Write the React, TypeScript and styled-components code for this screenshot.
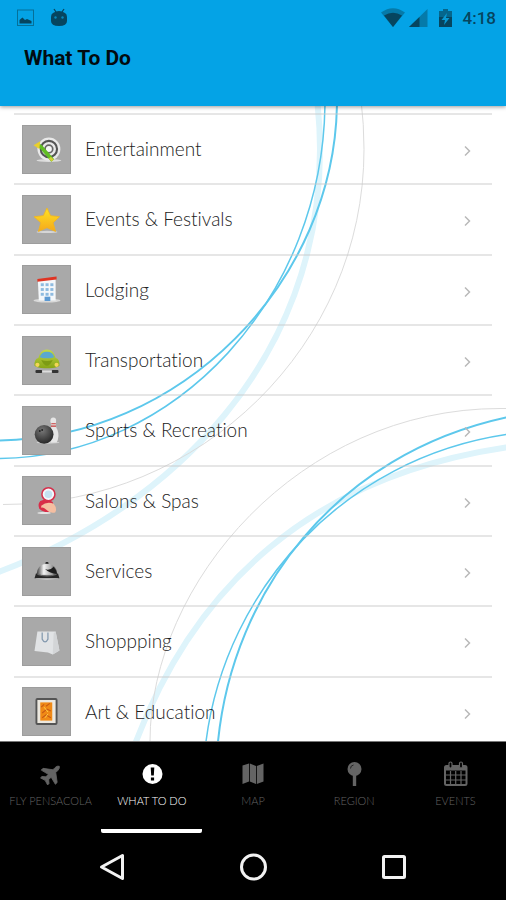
import React from "react";
import styled, { createGlobalStyle } from "styled-components";

const GlobalStyle = createGlobalStyle`
  * { box-sizing: border-box; }
  body { margin: 0; background: #000; }
  button { font: inherit; color: inherit; background: none; border: 0; padding: 0; cursor: pointer; }
`;

const Screen = styled.div`
  display: flex;
  flex-direction: column;
  height: 100vh;
  font-family: Lato, "Open Sans", sans-serif;
  font-variant-ligatures: none;
  background: #fff;
`;

const Gradients = styled.svg`
  position: absolute;
  width: 0;
  height: 0;
`;

const Header = styled.header`
  position: relative;
  z-index: 1;
  flex: none;
  height: 106px;
  background: #04a3e6;
  box-shadow: 0 1px 4px rgba(0, 0, 0, 0.4);
  font-family: Roboto, sans-serif;
`;

const StatusBar = styled.div`
  display: flex;
  align-items: center;
  justify-content: space-between;
  height: 36px;
  padding: 0 10px 0 16px;
  color: #06455f;
`;

const StatusGroup = styled.div<{ $gap: number }>`
  display: flex;
  align-items: center;
  gap: ${(p) => p.$gap}px;
`;

const Clock = styled.time`
  font-size: 17px;
  font-weight: 500;
  line-height: 20px;
`;

const Title = styled.h1`
  margin: 8px 0 0 24px;
  font-size: 21px;
  font-weight: 700;
  line-height: 28px;
  color: #020b10;
`;

const Main = styled.main`
  position: relative;
  flex: 1;
  min-height: 0;
  display: flex;
  flex-direction: column;
  padding: 7px 14px 0;
  overflow: hidden;
`;

const Backdrop = styled.svg`
  position: absolute;
  inset: 0;
  width: 100%;
  height: 100%;
`;

const List = styled.ul`
  position: relative;
  flex: 1;
  display: flex;
  flex-direction: column;
  margin: 0 0 -5px;
  padding: 0;
  list-style: none;
`;

const Item = styled.li`
  flex: 1;
  display: flex;
  border-top: 2px solid rgba(200, 200, 200, 0.45);
`;

const RowButton = styled.button`
  flex: 1;
  display: flex;
  align-items: center;
  gap: 14px;
  padding: 0 21px 0 8px;
  text-align: left;
`;

const Tile = styled.svg`
  flex: none;
  width: 49px;
  height: 49px;
  background: #a9a9a9;
  border: 1px solid #9d9d9d;
`;

const RowLabel = styled.span`
  flex: 1;
  font-size: 19px;
  font-weight: 300;
  line-height: 24px;
  color: #222;
`;

const Chevron = styled.svg`
  flex: none;
  width: 8px;
  height: 12px;
  margin-top: 4px;
`;

const TabBar = styled.nav`
  flex: none;
  display: flex;
  height: 92px;
  background: #000;
  border-top: 1px solid #777;
`;

const Tab = styled.button<{ $active: boolean }>`
  flex: 1;
  display: flex;
  flex-direction: column;
  align-items: center;
  gap: 5px;
  padding-top: 18px;
  border-bottom: 4px solid ${(p) => (p.$active ? "#fff" : "transparent")};
  border-radius: 2px;
  color: ${(p) => (p.$active ? "#fff" : "#646464")};
  font-size: 11px;
  font-weight: 300;
  line-height: 16px;
  white-space: nowrap;
`;

const TabIcon = styled.svg`
  width: 28px;
  height: 28px;
`;

const SystemBar = styled.div`
  flex: none;
  display: flex;
  height: 67px;
  padding: 0 42px;
  background: #000;
`;

const SystemButton = styled.button`
  flex: 1;
  display: flex;
  align-items: center;
  justify-content: center;
`;

const PALE = "#def4fb";
const GREY = "#dcdcdc";
const BLUE = "#5dc8ec";

const rings = [
  { color: PALE, width: 6, d: "M317 100 Q320 125 320 150 C320 360 173 506 0 572 L-6 574" },
  { color: PALE, width: 6, d: "M512 447 L506 448 C311 477 195 587 136 742 L134 748" },
  { color: GREY, width: 1, d: "M361 100 Q364 125 364 150 C364 345 201 505 3 505" },
  { color: GREY, width: 1, d: "M512 409 L500 409 C300 409 150 583 150 742 V748" },
  { color: BLUE, width: 2, d: "M337 100 C337 283 179 441 -4 441" },
  { color: BLUE, width: 1.5, d: "M325 100 C325 297 176 459 -4 459" },
  { color: BLUE, width: 2, d: "M512 417 L506 418 C336 455 233 592 218 742 L217 748" },
  { color: BLUE, width: 1.5, d: "M512 434 L506 435 C346 459 226 587 206 742 L205 748" },
];

const drawings: Record<string, React.ReactNode> = {
  target: (
    <>
      <ellipse cx="27" cy="36" rx="13" ry="1.5" fill="#dcdcdc" />
      <circle cx="27" cy="24" r="12" fill="#e9e9e9" />
      <circle cx="27" cy="24" r="8.5" fill="none" stroke="#555" strokeWidth="2.2" />
      <circle cx="27" cy="24" r="4" fill="#f6f6f6" stroke="#666" strokeWidth="1.8" />
      <path d="M15 19 L19 22 L31 36" fill="none" stroke="#61bd24" strokeWidth="4" />
      <path d="M11 20 L18 16 L17 24 Z" fill="#e9cf2c" />
      <path d="M28 33 L31 36" stroke="#d5ce35" strokeWidth="3" />
    </>
  ),
  star: (
    <>
      <ellipse cx="25" cy="37.5" rx="11" ry="1.2" fill="#d6d6d6" />
      <path
        d="M25 12.5 L28.8 20.5 L38 21.6 L31.4 28 L34 37 L25 33 L16 37 L18.6 28 L11.5 21.6 L21.2 20.5 Z"
        fill="url(#gold)"
        stroke="#f3b41b"
        strokeWidth="0.8"
        strokeLinejoin="round"
      />
    </>
  ),
  hotel: (
    <>
      <ellipse cx="25" cy="36" rx="14" ry="2" fill="#d9d9d9" />
      <path d="M15.5 15 L34 13 V36 H16.5 Z" fill="#f4f7fa" />
      <path d="M15 13.5 L35 11 V14 L15 16.5 Z" fill="#df3423" />
      <g fill="#8fbbe0">
        {[18.5, 23.5, 28.5].map((x) =>
          [18, 23, 28].map((y) => <rect key={`${x}-${y}`} x={x} y={y} width="3.2" height="3" />)
        )}
      </g>
      <rect x="22.5" y="32" width="6" height="4.5" fill="#5d9ad3" />
    </>
  ),
  car: (
    <>
      <rect x="13" y="34.5" width="7" height="3" rx="1" fill="#333" />
      <rect x="30" y="34.5" width="7" height="3" rx="1" fill="#333" />
      <rect x="20" y="35" width="10" height="2" fill="#ddd" />
      <path d="M12 30 Q11.5 23 16 22 Q18 13 25 13 Q32 13 34 22 Q38.5 23 38 30 Q35 33 25 32.5 Q15 33 12 30 Z" fill="url(#lime)" />
      <path d="M17.5 21 Q19 15.5 25 15.5 Q31 15.5 32.5 21 Q25 23.5 17.5 21 Z" fill="#5aa8cf" />
      <circle cx="15" cy="29" r="2.2" fill="#f4d657" />
      <circle cx="35" cy="29" r="2.2" fill="#f4d657" />
      <path d="M19 24 Q25 36 31 24 Q25 26 19 24 Z" fill="#7d9b14" />
    </>
  ),
  bowling: (
    <>
      <ellipse cx="26" cy="37" rx="12" ry="1.2" fill="#cecece" />
      <path d="M31.5 11 Q35 11 34.5 15 Q33.5 20 36 24 Q38.5 31 35 37 H29 Q26 30 28.5 24 Q30.5 20 28.5 15 Q28.5 11 31.5 11 Z" fill="#e6e6e6" />
      <path d="M29.5 17.5 H34.2 M29.2 20 H34.4" stroke="#c63a3a" strokeWidth="1.2" />
      <circle cx="22" cy="28.5" r="9.8" fill="url(#ball)" />
      <circle cx="17.5" cy="25" r="1" fill="#222" />
      <circle cx="20" cy="24" r="1" fill="#222" />
    </>
  ),
  compact: (
    <>
      <ellipse cx="22" cy="37.5" rx="7" ry="1.2" fill="#e4e4e4" />
      <path d="M18 25 Q25 22 31 26 L33 35 Q23 39 17 33 Q15 28 18 25 Z" fill="#d92c48" />
      <circle cx="26.5" cy="18" r="6.8" fill="#f3f8fb" stroke="#d62f4b" strokeWidth="1.6" />
      <circle cx="26.5" cy="18" r="4" fill="#c5e2f1" />
      <path d="M19 30 Q25 25 32 28 Q36 33 33.5 37 Q28 38.5 24 34 Q21 31 19 32 Z" fill="#f5bea1" />
    </>
  ),
  bell: (
    <>
      <ellipse cx="25" cy="31.5" rx="12" ry="1.3" fill="#ddd" />
      <rect x="23.5" y="14.5" width="3" height="3" rx="1" fill="#222" />
      <path d="M14 28 Q15 17 25 16.5 Q35 17 36 28 Z" fill="url(#chrome)" />
      <path d="M23 22 Q28 24 32 19.5 Q35 23 35.5 27 Q28 27 23 22 Z" fill="#1c1c1c" />
      <path d="M13.500 26.500 Q25 31 36.500 26.500 L38 31.500 H12 Z" fill="#262626" />
      <path d="M15 27.500 Q25 31 35 27.500" fill="none" stroke="#999" strokeWidth="0.600" />
    </>
  ),
  bag: (
    <>
      <path d="M15 14 L34 14 L38 34 L31 38 L26 36 L12 34.5 Z" fill="#e1e3e5" />
      <path d="M34 14 L38 34 L31 38 L32 16 Z" fill="#d3d5d7" />
      <path d="M20 15 V22 Q23 28 26 22 V15" fill="none" stroke="#8399ae" strokeWidth="1.3" />
    </>
  ),
  picture: (
    <>
      <rect x="14" y="11.5" width="21" height="26" rx="1" fill="#ece8df" stroke="#555" strokeWidth="2" />
      <rect x="18" y="15" width="12.5" height="19" fill="#f08a16" />
      <path d="M19 20 L22 17 M24 19 L28 16 M20 26 L25 22 L29 24 M20 31 L24 28 L29 31" stroke="#c85a14" strokeWidth="1.2" fill="none" />
      <path d="M22 20 L26 25 M26 27 L23 31" stroke="#ffd04c" />
    </>
  ),
};

const rows = [
  ["Entertainment", "target"],
  ["Events & Festivals", "star"],
  ["Lodging", "hotel"],
  ["Transportation", "car"],
  ["Sports & Recreation", "bowling"],
  ["Salons & Spas", "compact"],
  ["Services", "bell"],
  ["Shoppping", "bag"],
  ["Art & Education", "picture"],
];

const tabs: { label: string; icon: React.ReactNode }[] = [
  {
    label: "FLY PENSACOLA",
    icon: (
      <path
        transform="translate(14.5 14) rotate(45)"
        d="M0 -11 Q2 -10 2 -7 V-4 L10 2 V4.500 L2 2.500 V6 L5 8.500 V10.500 L0 9 L-5 10.500 V8.500 L-2 6 V2.500 L-10 4.500 V2 L-2 -4 V-7 Q-2 -10 0 -11 Z"
        fill="currentColor"
        stroke="currentColor"
        strokeWidth="0.8"
        strokeLinejoin="round"
      />
    ),
  },
  {
    label: "WHAT TO DO",
    icon: (
      <>
        <circle cx="14.500" cy="14" r="10" fill="currentColor" />
        <path d="M12.700 7.500 H16.300 L15.800 15.500 H13.200 Z M12.900 17.500 H16.100 V20.500 H12.900 Z" fill="#000" />
      </>
    ),
  },
  {
    label: "MAP",
    icon: (
      <path
        d="M3.500 5.500 L10 3.500 V21.500 L3.500 24 Z M10.800 3.500 L17 6 V24 L10.800 21.500 Z M17.800 6 L24.500 3.500 V21.500 L17.800 24 Z"
        fill="currentColor"
      />
    ),
  },
  {
    label: "REGION",
    icon: (
      <>
        <circle cx="14.500" cy="9" r="7" fill="currentColor" />
        <path d="M12.800 15 H16.200 V26 H12.800 Z" fill="currentColor" />
        <path d="M10.500 8.500 Q10.500 5.500 13.500 5" fill="none" stroke="#222" strokeWidth="1" />
      </>
    ),
  },
  {
    label: "EVENTS",
    icon: (
      <g fill="none" stroke="currentColor">
        <rect x="4" y="6" width="21.500" height="19" rx="1.500" strokeWidth="2" />
        <path d="M4 8.500 H25" strokeWidth="4" />
        <path d="M9.500 11 V25 M14.700 11 V25 M20 11 V25 M4 15 H25 M4 20 H25" strokeWidth="1.200" />
        <rect x="8" y="2" width="3" height="6" rx="1.500" fill="#000" strokeWidth="1.200" />
        <rect x="18.500" y="2" width="3" height="6" rx="1.500" fill="#000" strokeWidth="1.200" />
      </g>
    ),
  },
];

const systemButtons: { label: string; shape: React.ReactNode }[] = [
  { label: "Back", shape: <path d="M24.500 2.500 V25.500 L3.500 14 Z" /> },
  { label: "Home", shape: <circle cx="14.500" cy="14" r="12" /> },
  { label: "Recent apps", shape: <rect x="3.500" y="3.500" width="21" height="21" rx="1" /> },
];

export default function App() {
  return (
    <Screen>
      <GlobalStyle />
      <Gradients aria-hidden="true">
        <defs>
          <linearGradient id="gold" x1="0" y1="0" x2="0" y2="1">
            <stop offset="0" stopColor="#ffe321" />
            <stop offset="1" stopColor="#f5a81c" />
          </linearGradient>
          <linearGradient id="lime" x1="0" y1="0" x2="0" y2="1">
            <stop offset="0" stopColor="#c2d94a" />
            <stop offset="1" stopColor="#87a516" />
          </linearGradient>
          <radialGradient id="ball" cx="0.4" cy="0.3" r="0.7">
            <stop offset="0" stopColor="#777" />
            <stop offset="1" stopColor="#292929" />
          </radialGradient>
          <linearGradient id="chrome" x1="0" y1="0" x2="1" y2="0">
            <stop offset="0" stopColor="#333" />
            <stop offset="0.35" stopColor="#f4f4f4" />
            <stop offset="0.7" stopColor="#aaa" />
            <stop offset="1" stopColor="#333" />
          </linearGradient>
        </defs>
      </Gradients>
      <Header>
        <StatusBar>
          <StatusGroup $gap={14}>
            <svg width="19" height="18" viewBox="0 0 19 18" aria-hidden="true">
              <rect x="1.500" y="1" width="16" height="15.500" fill="none" stroke="#057099" strokeWidth="1" />
              <path d="M3.500 14.500 V11 L6.500 8.500 L9 11 L11 10 L15.500 12 V14.500 Z" fill="currentColor" />
            </svg>
            <svg width="20" height="20" viewBox="0 0 20 20" aria-hidden="true">
              <path d="M5 1 L7 4 M15 1 L13 4" stroke="currentColor" strokeWidth="1.300" />
              <path d="M4 5 Q10 1 16 5 Q18 6 18 9 V13 Q18 18 10 18 Q2 18 2 13 V9 Q2 6 4 5 Z" fill="currentColor" />
              <circle cx="6.500" cy="9.500" r="1.200" fill="#0788bd" />
              <circle cx="13.500" cy="9.500" r="1.200" fill="#0788bd" />
            </svg>
          </StatusGroup>
          <StatusGroup $gap={10}>
            <svg width="72" height="20" viewBox="0 0 72 20" aria-hidden="true">
              <path d="M0 4.500 Q12 -4 24 4.500 L12 19 Z" fill="#057aa9" />
              <path d="M3 7.500 Q12 2 21 7.500 L12 19 Z" fill="currentColor" />
              <path d="M46.500 1 V19 H28 Z" fill="#057aa9" />
              <path d="M38.500 9 V19 H28 Z" fill="currentColor" />
              <path d="M58 3 H62 V1 H67 V3 H71 V9 H58 Z" fill="#05668c" />
              <path d="M58 9 H71 V19 H58 Z" fill="currentColor" />
              <path d="M66 5 L60.500 12 H64 L63 17 L68.500 10 H65 Z" fill="#0899d3" />
            </svg>
            <Clock>4:18</Clock>
          </StatusGroup>
        </StatusBar>
        <Title>What To Do</Title>
      </Header>

      <Main>
        <Backdrop viewBox="0 106 506 636" preserveAspectRatio="xMidYMid slice" aria-hidden="true">
          {rings.map((ring) => (
            <path key={ring.d} d={ring.d} fill="none" stroke={ring.color} strokeWidth={ring.width} />
          ))}
        </Backdrop>
        <List>
          {rows.map(([label, icon]) => (
            <Item key={label}>
              <RowButton type="button">
                <Tile viewBox="0 0 49 49" aria-hidden="true">{drawings[icon]}</Tile>
                <RowLabel>{label}</RowLabel>
                <Chevron viewBox="0 0 8 12" aria-hidden="true">
                  <path d="M2 1.500 L6.500 6 L2 10.500" fill="none" stroke="#b9b9b9" strokeWidth="1.500" />
                </Chevron>
              </RowButton>
            </Item>
          ))}
        </List>
      </Main>

      <TabBar>
        {tabs.map((tab) => {
          const active = tab.label === "WHAT TO DO";
          return (
            <Tab key={tab.label} type="button" $active={active} aria-current={active ? "page" : undefined}>
              <TabIcon viewBox="0 0 28 28" aria-hidden="true">{tab.icon}</TabIcon>
              {tab.label}
            </Tab>
          );
        })}
      </TabBar>
      <SystemBar>
        {systemButtons.map((button) => (
          <SystemButton key={button.label} type="button" aria-label={button.label}>
            <svg width="28" height="28" viewBox="0 0 28 28" fill="none" stroke="#f2f2f2" strokeWidth="3" strokeLinejoin="round">
              {button.shape}
            </svg>
          </SystemButton>
        ))}
      </SystemBar>
    </Screen>
  );
}
